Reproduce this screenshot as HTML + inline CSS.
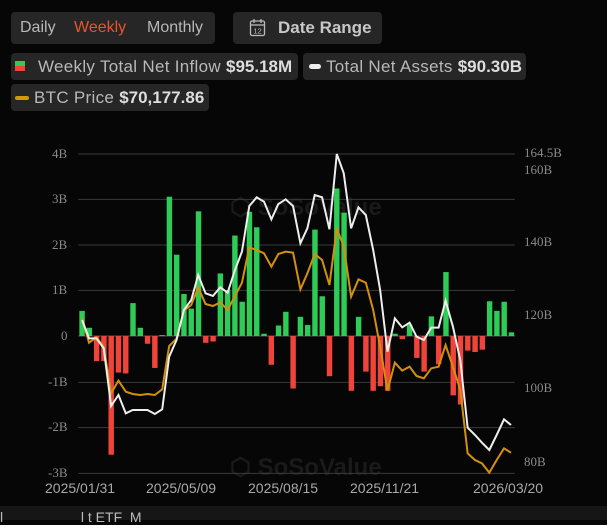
<!DOCTYPE html>
<html><head><style>
body{margin:0;width:607px;height:520px;background:#060606;overflow:hidden;position:relative;font-family:"Liberation Sans",sans-serif;color:#c8c8c8}
.box{position:absolute;background:#262626;border-radius:4px}
.t{position:absolute;white-space:nowrap}
.ax{position:absolute;font-family:"Liberation Serif",serif;font-size:13px;color:#8a8a8a}
.xl{position:absolute;font-size:14px;color:#a8a8a8;top:480px}
</style></head><body>
<div class="box" style="left:11px;top:12px;width:204px;height:32px"></div>
<div class="t" style="left:20px;top:19px;font-size:16px;color:#b8b8b8">Daily</div>
<div class="t" style="left:74px;top:19px;font-size:16px;color:#e4572e">Weekly</div>
<div class="t" style="left:147px;top:19px;font-size:16px;color:#b8b8b8">Monthly</div>
<div class="box" style="left:233px;top:12px;width:149px;height:32px"></div>
<svg style="position:absolute;left:249px;top:18px" width="17" height="19" viewBox="0 0 17 19"><rect x="1.5" y="3" width="14" height="14.5" rx="1.5" fill="none" stroke="#bbb" stroke-width="1.3"/><line x1="1.5" y1="7" x2="15.5" y2="7" stroke="#bbb" stroke-width="1.3"/><line x1="5" y1="1" x2="5" y2="5" stroke="#bbb" stroke-width="1.3"/><line x1="12" y1="1" x2="12" y2="5" stroke="#bbb" stroke-width="1.3"/><text x="8.5" y="15.5" font-size="7.5" fill="#bbb" text-anchor="middle" font-family="Liberation Sans">12</text></svg>
<div class="t" style="left:278px;top:18px;font-size:17px;font-weight:bold;color:#c8c8c8">Date Range</div>

<div class="box" style="left:11px;top:53px;width:287px;height:27px"></div>
<div style="position:absolute;left:15px;top:61px;width:10px;height:5px;background:#2ecc56"></div>
<div style="position:absolute;left:15px;top:66px;width:10px;height:5px;background:#f0443a"></div>
<div class="t" style="left:38px;top:57px;font-size:17px;letter-spacing:0.3px;color:#b8b8b8">Weekly Total Net Inflow <b style="color:#ddd;font-size:17px;letter-spacing:0">$95.18M</b></div>
<div class="box" style="left:303px;top:53px;width:223px;height:27px"></div>
<div style="position:absolute;left:309px;top:64px;width:12px;height:5px;border-radius:3px;background:#eee"></div>
<div class="t" style="left:326px;top:57px;font-size:17px;letter-spacing:0.3px;color:#b8b8b8">Total Net Assets <b style="color:#ddd;font-size:17px;letter-spacing:0">$90.30B</b></div>
<div class="box" style="left:11px;top:84px;width:198px;height:27px"></div>
<div style="position:absolute;left:15px;top:96px;width:14px;height:4px;border-radius:2px;background:#d4960a"></div>
<div class="t" style="left:34px;top:88px;font-size:17px;letter-spacing:0.3px;color:#b8b8b8">BTC Price <b style="color:#ddd;font-size:17px;letter-spacing:0">$70,177.86</b></div>

<div class="ax" style="left:52px;top:146px">4B</div>
<div class="ax" style="left:52px;top:191px">3B</div>
<div class="ax" style="left:52px;top:237px">2B</div>
<div class="ax" style="left:52px;top:282px">1B</div>
<div class="ax" style="left:61px;top:328px">0</div>
<div class="ax" style="left:48px;top:374px">-1B</div>
<div class="ax" style="left:48px;top:419px">-2B</div>
<div class="ax" style="left:48px;top:465px">-3B</div>
<div class="ax" style="left:524px;top:145px">164.5B</div>
<div class="ax" style="left:524px;top:162px">160B</div>
<div class="ax" style="left:524px;top:234px">140B</div>
<div class="ax" style="left:524px;top:307px">120B</div>
<div class="ax" style="left:524px;top:380px">100B</div>
<div class="ax" style="left:524px;top:454px">80B</div>
<div class="xl" style="left:45px">2025/01/31</div>
<div class="xl" style="left:146px">2025/05/09</div>
<div class="xl" style="left:248px">2025/08/15</div>
<div class="xl" style="left:350px">2025/11/21</div>
<div class="xl" style="left:473px">2026/03/20</div>
<div class="t" style="left:230px;top:193px;font-size:24px;font-weight:bold;color:#1a1a1a">⬡ SoSoValue</div>
<div class="t" style="left:230px;top:453px;font-size:24px;font-weight:bold;color:#1a1a1a">⬡ SoSoValue</div>

<svg style="position:absolute;left:0;top:130px" width="607" height="390" viewBox="0 0 1568 1170" preserveAspectRatio="none">
<g stroke="#3a3a3a" stroke-width="1">
<line x1="202" x2="1330" y1="72" y2="72" vector-effect="non-scaling-stroke"/>
<line x1="202" x2="1330" y1="208" y2="208" vector-effect="non-scaling-stroke"/>
<line x1="202" x2="1330" y1="345" y2="345" vector-effect="non-scaling-stroke"/>
<line x1="202" x2="1330" y1="481" y2="481" vector-effect="non-scaling-stroke"/>
<line x1="202" x2="1330" y1="618" y2="618" stroke="#555" vector-effect="non-scaling-stroke"/>
<line x1="202" x2="1330" y1="757" y2="757" vector-effect="non-scaling-stroke"/>
<line x1="202" x2="1330" y1="893" y2="893" vector-effect="non-scaling-stroke"/>
<line x1="202" x2="1330" y1="1030" y2="1030" vector-effect="non-scaling-stroke"/>
</g>
<g id="bars"></g>
<polyline fill="none" stroke="#d4900a" stroke-width="2" vector-effect="non-scaling-stroke" points="212,565 230,638 249,622 268,650 287,790 306,752 325,785 343,792 362,795 381,792 400,795 419,778 437,648 456,626 475,542 494,525 512,472 531,522 550,528 569,517 588,540 607,498 625,458 644,352 663,360 682,370 701,410 719,372 738,365 757,368 776,478 794,430 813,372 832,390 851,465 870,295 888,350 907,500 926,448 945,458 964,540 982,650 1001,782 1020,698 1039,722 1058,710 1076,738 1095,745 1114,715 1133,710 1151,645 1170,710 1189,780 1208,970 1227,990 1245,1000 1264,1028 1283,990 1302,955 1320,968"/>
<polyline fill="none" stroke="#eeeeee" stroke-width="2" vector-effect="non-scaling-stroke" points="212,570 230,625 249,625 268,655 287,828 306,795 325,850 343,840 362,840 381,840 400,852 419,838 437,680 456,630 475,540 494,510 512,435 531,490 550,498 569,472 588,488 607,420 625,365 644,228 663,202 682,215 701,268 719,222 738,208 757,228 776,340 794,295 813,195 832,202 851,298 870,72 888,130 907,295 926,232 945,255 964,360 982,480 1001,665 1020,565 1039,592 1058,578 1076,620 1095,630 1114,593 1133,593 1151,512 1170,590 1189,690 1208,893 1227,915 1245,938 1264,960 1283,915 1302,868 1320,885"/>
</svg>
<script>
var v=[.55,.18,-.55,-.55,-2.6,-.8,-.82,.72,.18,-.17,-.7,.02,3.05,1.78,.92,.6,2.73,-.15,-.12,1.37,1.0,2.2,.75,2.72,2.38,.05,-.63,.23,.53,-1.15,.42,.24,2.33,.87,-.88,3.23,2.7,-1.2,.42,-.78,-1.2,-1.1,-1.2,.05,-.07,.25,-.48,-.78,.43,-.62,1.4,-1.3,-1.5,-.32,-.35,-.3,.76,.55,.75,.08];
var g=document.getElementById('bars'),s='';
v.forEach(function(b,i){var x=212+18.8*i-7,h=Math.abs(b)*137,y=b>0?618-h:618;s+='<rect x="'+x+'" y="'+y+'" width="14" height="'+h+'" fill="'+(b>0?'#2ecc56':'#f0443a')+'"/>';});
g.innerHTML=s;
</script>
<div style="position:absolute;left:0;top:506px;width:607px;height:14px;background:#161616"></div>
<div class="t" style="left:0;top:509px;font-size:14px;color:#bbb">l &nbsp; &nbsp; &nbsp; &nbsp; &nbsp; &nbsp; &nbsp; &nbsp; &nbsp; &nbsp;l t ETF &nbsp;M</div>
</body></html>
